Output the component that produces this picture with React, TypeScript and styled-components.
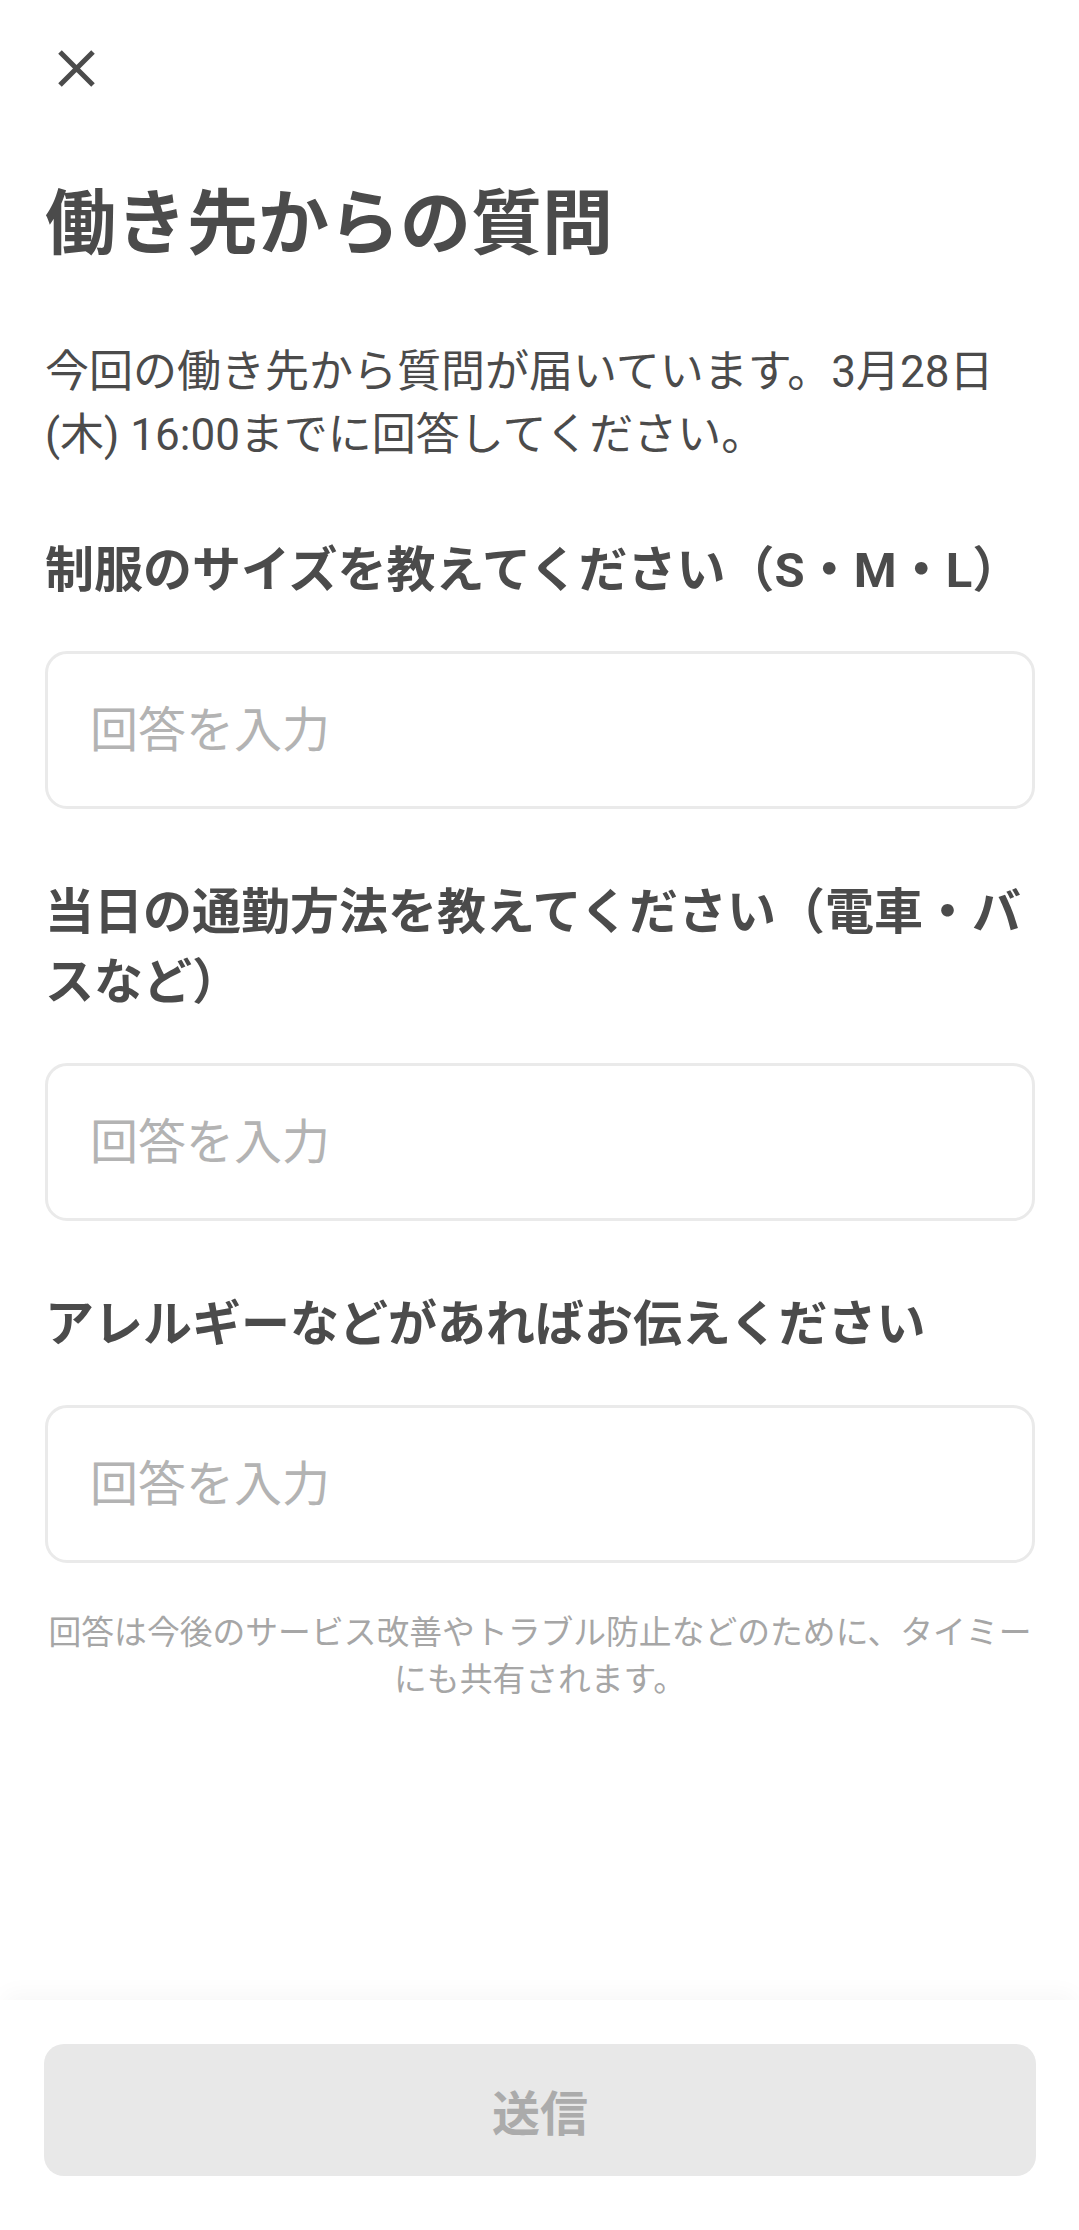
import React, { useState } from "react";
import styled, { createGlobalStyle } from "styled-components";

const GlobalStyle = createGlobalStyle`
  html, body {
    margin: 0;
    padding: 0;
    background: #ffffff;
  }
  body {
    font-family: "Roboto", "Noto Sans CJK JP", sans-serif;
    color: #4b4b4b;
  }
  * {
    box-sizing: border-box;
  }
`;

const questions = [
  { id: "q1", label: "制服のサイズを教えてください（S・M・L）" },
  { id: "q2", label: "当日の通勤方法を教えてください（電車・バスなど）" },
  { id: "q3", label: "アレルギーなどがあればお伝えください" },
];

const CloseIcon = () => (
  <svg width="37" height="37" viewBox="0 0 37 37" aria-hidden="true">
    <path
      d="M2 2 L35 35 M35 2 L2 35"
      stroke="#4b4b4b"
      strokeWidth="5"
      fill="none"
    />
  </svg>
);

const App = () => {
  const [answers, setAnswers] = useState<Record<string, string>>({});

  const filled = questions.every((q) => (answers[q.id] || "").trim() !== "");

  return (
    <Page>
      <GlobalStyle />
      <Content>
        <Header>
          <CloseButton type="button" aria-label="閉じる">
            <CloseIcon />
          </CloseButton>
        </Header>
        <Title>働き先からの質問</Title>
        <Lead>
          今回の働き先から質問が届いています。3月28日(木) 16:00までに回答してください。
        </Lead>
        {questions.map((q) => (
          <Question key={q.id}>
            <Label htmlFor={q.id}>{q.label}</Label>
            <AnswerInput
              id={q.id}
              type="text"
              placeholder="回答を入力"
              value={answers[q.id] || ""}
              onChange={(e) =>
                setAnswers({ ...answers, [q.id]: e.target.value })
              }
            />
          </Question>
        ))}
        <Note>
          回答は今後のサービス改善やトラブル防止などのために、タイミーにも共有されます。
        </Note>
      </Content>
      <Footer>
        <SubmitButton type="button" disabled={!filled} $active={filled}>
          送信
        </SubmitButton>
      </Footer>
    </Page>
  );
};

const Page = styled.div`
  min-height: 100vh;
  display: flex;
  flex-direction: column;
  background: #ffffff;
`;

const Content = styled.main`
  flex: 1;
  padding: 0 44px 0 45px;
`;

const Header = styled.header`
  height: 137px;
  display: flex;
  align-items: center;
`;

const CloseButton = styled.button`
  display: flex;
  align-items: center;
  justify-content: center;
  margin-left: 13px;
  padding: 0;
  border: none;
  background: none;
  cursor: pointer;
`;

const Title = styled.h1`
  margin: 38px 0 0;
  font-size: 71px;
  line-height: 98px;
  font-weight: 600;
  color: #4b4b4b;
`;

const Lead = styled.p`
  margin: 68px 0 0;
  font-size: 44px;
  line-height: 63px;
  font-weight: 400;
  color: #4b4b4b;
`;

const Question = styled.section`
  display: flex;
  flex-direction: column;
  margin-top: 69px;
`;

const Label = styled.label`
  font-size: 49px;
  line-height: 70px;
  font-weight: 700;
  color: #4b4b4b;
`;

const AnswerInput = styled.input`
  display: block;
  width: 100%;
  height: 158px;
  margin-top: 45px;
  padding: 0 40px 0 42px;
  border: 3px solid #eaeaea;
  border-radius: 22px;
  background: #ffffff;
  font-family: inherit;
  font-size: 48px;
  color: #4b4b4b;
  outline: none;
  &::placeholder {
    color: #b3b3b3;
  }
`;

const Note = styled.p`
  margin: 47px 0 0;
  text-align: center;
  font-size: 32.8px;
  line-height: 47px;
  color: #a6a6a6;
`;

const Footer = styled.footer`
  padding: 44px 43px 54px 44px;
  background: #ffffff;
  box-shadow: 0 -10px 22px -4px rgba(0, 0, 0, 0.035);
`;

const SubmitButton = styled.button<{ $active: boolean }>`
  display: flex;
  align-items: center;
  justify-content: center;
  width: 100%;
  height: 132px;
  border: none;
  border-radius: 20px;
  background: ${(p) => (p.$active ? "#ff7a00" : "#e8e8e8")};
  color: ${(p) => (p.$active ? "#ffffff" : "#ababab")};
  font-family: inherit;
  font-size: 48px;
  font-weight: 700;
`;

export default App;
